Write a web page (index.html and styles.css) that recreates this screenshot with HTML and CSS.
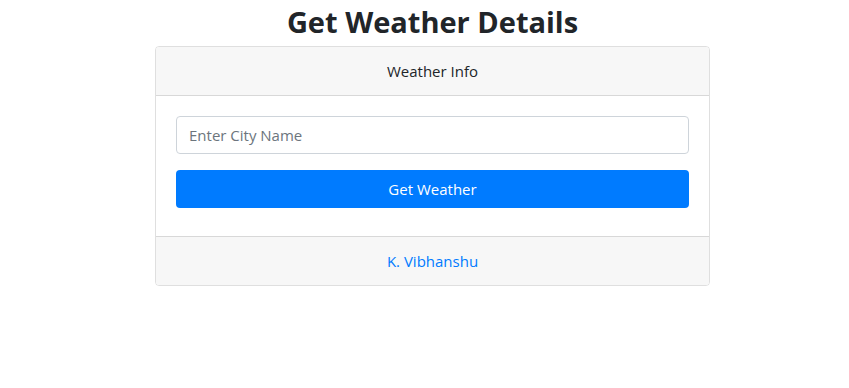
FILE: index.html
```html
<!DOCTYPE html>
<html>
<head>
<meta charset="utf-8">
<link rel="stylesheet" href="styles.css">
</head>
<body>
<div class="page">
  <h1 class="title">Get Weather Details</h1>
  <div class="card">
    <div class="card-header">Weather Info</div>
    <div class="card-body">
      <input class="city-input" type="text" placeholder="Enter City Name">
      <button class="btn-primary">Get Weather</button>
    </div>
    <div class="card-footer"><a class="author" href="#">K. Vibhanshu</a></div>
  </div>
</div>
</body>
</html>
```
FILE: styles.css
```css
html, body {
  margin: 0;
  padding: 0;
  background: #fff;
}
body {
  font-family: "Open Sans", "Noto Sans", sans-serif;
  font-size: 16px;
  color: #212529;
}
.page {
  width: 555px;
  margin-left: 155px;
  display: flex;
  flex-direction: column;
}
.title {
  margin: 0 0 2px;
  font-size: 29px;
  line-height: 44px;
  font-weight: 700;
  text-align: center;
  color: #212529;
}
.card {
  border: 1px solid rgba(0,0,0,0.125);
  border-radius: 4px;
  display: flex;
  flex-direction: column;
  overflow: hidden;
}
.card-header {
  height: 49px;
  box-sizing: border-box;
  display: flex;
  align-items: center;
  justify-content: center;
  background: #f7f7f7;
  border-bottom: 1px solid rgba(0,0,0,0.125);
  font-size: 15px;
}
.card-body {
  padding: 20px 20px 28px;
  display: flex;
  flex-direction: column;
  gap: 16px;
}
.city-input {
  height: 38px;
  box-sizing: border-box;
  border: 1px solid #ced4da;
  border-radius: 4px;
  padding: 0 12px;
  font-family: inherit;
  font-size: 15px;
  color: #495057;
  outline: none;
}
.city-input::placeholder {
  color: #6c757d;
}
.btn-primary {
  height: 38px;
  border: none;
  border-radius: 4px;
  background: #007bff;
  color: #fff;
  font-family: inherit;
  font-size: 15px;
}
.card-footer {
  height: 49px;
  box-sizing: border-box;
  display: flex;
  align-items: center;
  justify-content: center;
  background: #f7f7f7;
  border-top: 1px solid rgba(0,0,0,0.125);
}
.author {
  color: #007bff;
  text-decoration: none;
  font-size: 15px;
}
```
